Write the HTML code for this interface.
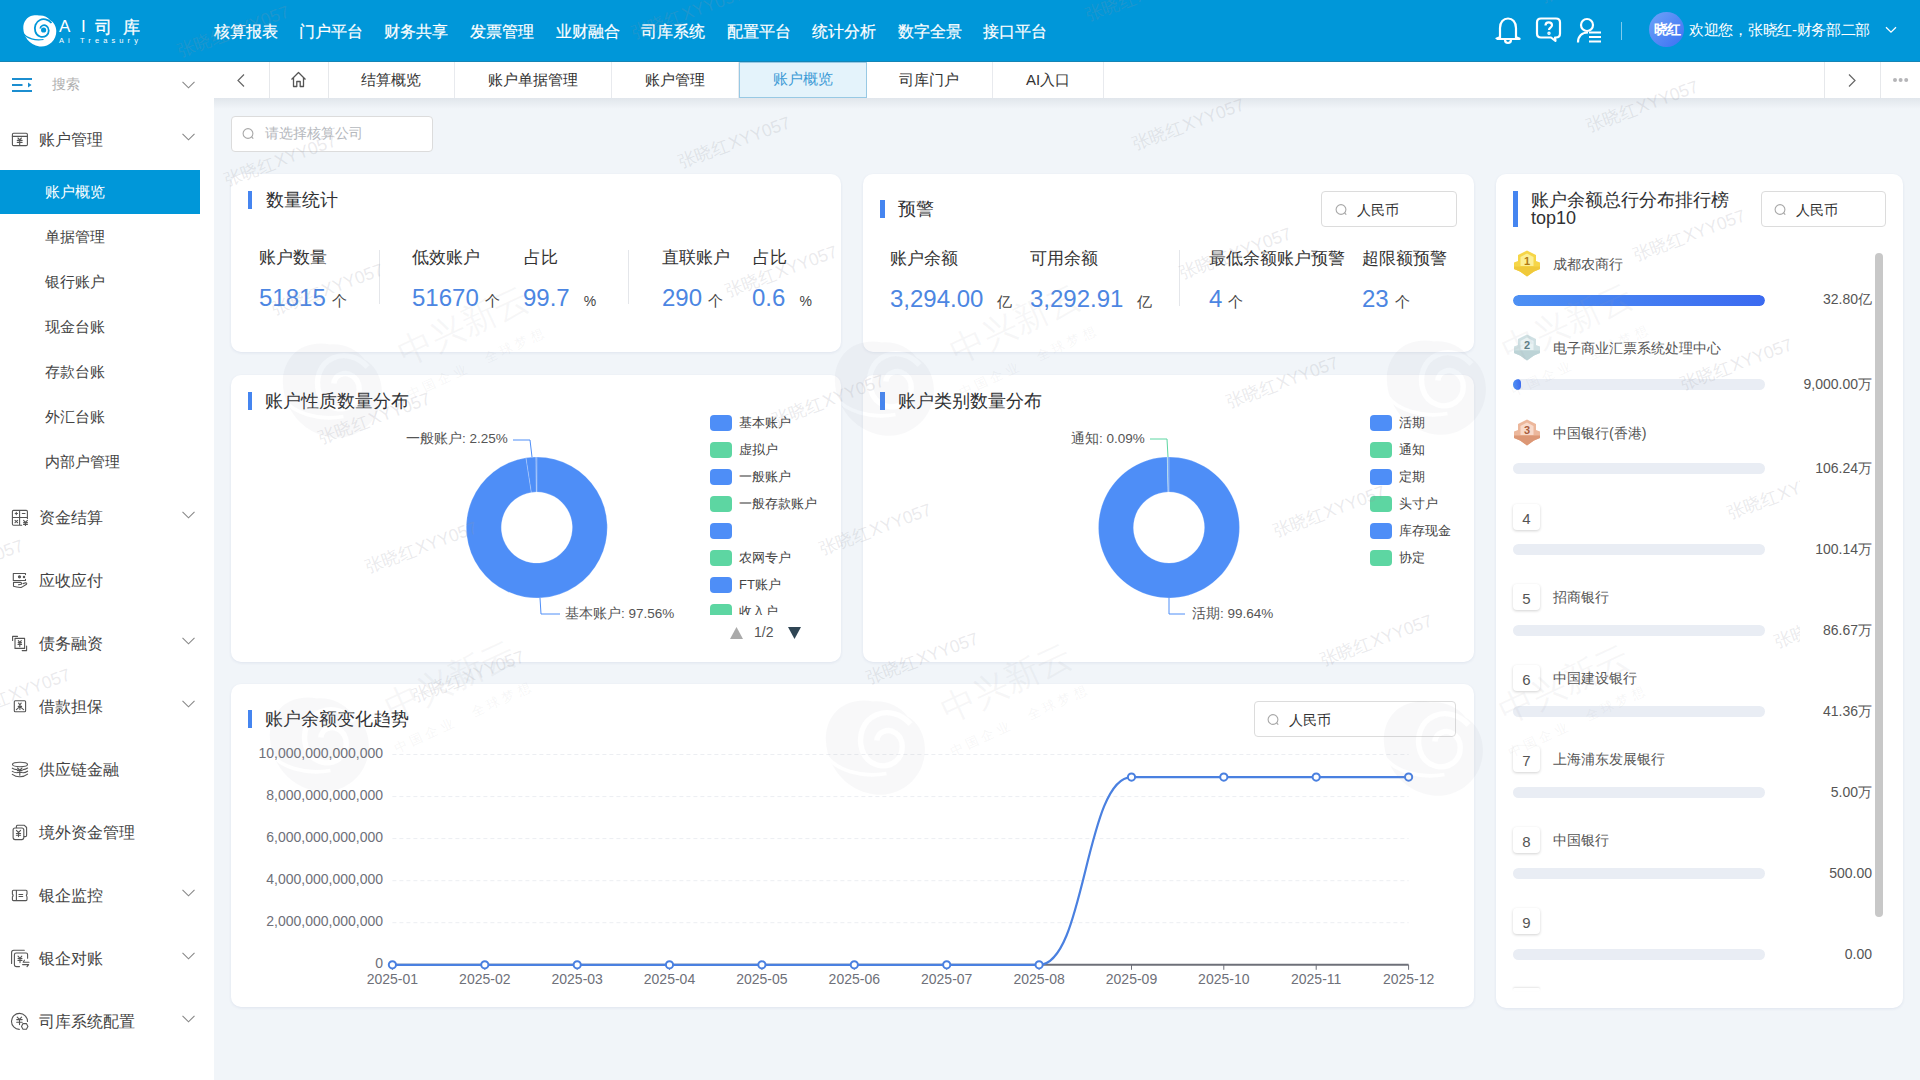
<!DOCTYPE html>
<html><head><meta charset="utf-8">
<style>
*{box-sizing:border-box;margin:0;padding:0}
html,body{width:1920px;height:1080px;overflow:hidden}
body{font-family:"Liberation Sans",sans-serif;background:#f1f5f9;color:#333;position:relative}
.abs{position:absolute}
#hdr{position:absolute;left:0;top:0;width:1920px;height:62px;background:#0097d9;box-shadow:inset 0 -1px 0 #1585b5}
.nav{position:absolute;top:21px;color:#fff;font-size:16px;line-height:22px;white-space:nowrap;-webkit-text-stroke:0.2px #fff}
#side{position:absolute;left:0;top:62px;width:214px;height:1018px;background:#fff}
#tabs{position:absolute;left:214px;top:62px;width:1706px;height:36px;background:#fff}
#tabsh{position:absolute;left:214px;top:98px;width:1706px;height:11px;background:linear-gradient(180deg,rgba(60,80,100,0.09),rgba(60,80,100,0))}
.tab{position:absolute;top:0;height:36px;border-right:1px solid #e8eaee;font-size:15px;line-height:36px;text-align:center;color:#333}
.card{position:absolute;background:#fff;border-radius:10px;box-shadow:0 1px 3px rgba(40,70,130,0.09)}
.ttl{position:absolute;font-size:18px;line-height:22px;color:#303133;white-space:nowrap}
.bar{position:absolute;width:5px;height:18px;background:#4585f0}
.lbl{position:absolute;font-size:17px;line-height:20px;color:#333;white-space:nowrap}
.num{position:absolute;font-size:24px;line-height:28px;color:#4c86e2;white-space:nowrap}
.unit{font-size:15px;color:#444;margin-left:6px}
.pct{font-size:14px;margin-left:14px}
.yi{margin-left:14px}
.rk{position:absolute;font-size:14.3px;line-height:20px;color:#555;white-space:nowrap}
.rv{position:absolute;right:48px;font-size:14px;line-height:20px;color:#555;white-space:nowrap;text-align:right}
.pb{position:absolute;left:1513px;width:252px;height:11px;border-radius:5.5px;background:#e9edf4;overflow:hidden}
.badge{position:absolute;left:1513px;width:27px;height:26px;border-radius:4px;background:#fff;box-shadow:0 1px 3px rgba(0,0,0,0.18);font-size:15px;line-height:30px;text-align:center;color:#555}
.sel{position:absolute;background:#fff;border:1px solid #dcdcdc;border-radius:4px;font-size:13px;color:#333}
.smenu{position:absolute;left:39px;font-size:16px;line-height:20px;color:#444;white-space:nowrap}
.sub{position:absolute;left:45px;font-size:15px;line-height:20px;color:#444;white-space:nowrap}
.chev{position:absolute;left:182px}
</style></head><body>

<!-- HEADER -->
<div id="hdr">
<svg class="abs" style="left:22px;top:14px" width="36" height="34" viewBox="0 0 36 34">
<path d="M11 1.5 C5 2.5 1 8 1.3 14.5 C1.5 22 7 31 17.5 32.5 C26 33.5 34.5 27 34.3 17 C34.2 12 31.5 8 28.5 6.5 C26 3 21 1 17 1.5 C15 1 13 1 11 1.5 Z" fill="#fff"/>
<path d="M29.5 9 C26 5 21 4.5 18 6 C13.5 8 12 13 13.3 17.5 C14.8 22.5 20.5 24.5 24.5 21.5 C27.5 19 27.5 14 24.5 12 C22 10.3 18.5 11.5 18.3 14.5" fill="none" stroke="#0097d9" stroke-width="1.8"/>
<circle cx="21.6" cy="16" r="2.6" fill="#0097d9"/>
<path d="M1.3 19.5 C5 24.5 13 27 21.5 25.5" fill="none" stroke="#0097d9" stroke-width="1.2"/>
</svg>
<div class="abs" style="left:59px;top:17px;color:#fff;font-size:17px;line-height:20px;white-space:nowrap">A</div>
<div class="abs" style="left:81px;top:17px;color:#fff;font-size:17px;line-height:20px;white-space:nowrap">I</div>
<div class="abs" style="left:95px;top:17px;color:#fff;font-size:17px;line-height:22px;white-space:nowrap;-webkit-text-stroke:0.3px #fff">司</div>
<div class="abs" style="left:123px;top:17px;color:#fff;font-size:17px;line-height:22px;white-space:nowrap;-webkit-text-stroke:0.3px #fff">库</div>
<div class="abs" style="left:59px;top:36px;color:#fff;font-size:7.5px;line-height:9px;letter-spacing:4.1px;white-space:nowrap">Ai Treasury</div>
<div class="nav" style="left:214px">核算报表</div>
<div class="nav" style="left:299px">门户平台</div>
<div class="nav" style="left:384px">财务共享</div>
<div class="nav" style="left:470px">发票管理</div>
<div class="nav" style="left:556px">业财融合</div>
<div class="nav" style="left:641px">司库系统</div>
<div class="nav" style="left:727px">配置平台</div>
<div class="nav" style="left:812px">统计分析</div>
<div class="nav" style="left:898px">数字全景</div>
<div class="nav" style="left:983px">接口平台</div>
<svg class="abs" style="left:1494px;top:16px" width="28" height="30" viewBox="0 0 28 30" fill="none" stroke="#fff" stroke-width="2.2" stroke-linejoin="round">
<path d="M6 22 V12 C6 6 9.5 2.5 14 2.5 C18.5 2.5 22 6 22 12 V22"/><path d="M2.5 23 H25.5 V22.5 C24 22 22 21.5 22 21 M6 21 C6 21.5 4 22 2.5 22.5 V23"/><path d="M11 23.5 C11 26 12.5 27 14 27 C15.5 27 17 26 17 23.5"/>
</svg>
<svg class="abs" style="left:1535px;top:16px" width="28" height="28" viewBox="0 0 28 28" fill="none" stroke="#fff" stroke-width="2.2" stroke-linejoin="round">
<path d="M6 2.5 H21 C23.5 2.5 25 4 25 6.5 V17.5 C25 20 23.5 21.5 21 21.5 H20 L20.5 25 L16 21.5 H6 C3.5 21.5 2 20 2 17.5 V6.5 C2 4 3.5 2.5 6 2.5Z"/>
<path d="M10.5 9.5 C10.5 7.5 12 6.3 13.7 6.3 C15.5 6.3 17 7.5 17 9.3 C17 11.5 14 11.8 14 14"/>
<circle cx="14" cy="17.3" r="0.6" fill="#fff"/>
</svg>
<svg class="abs" style="left:1576px;top:17px" width="28" height="28" viewBox="0 0 28 28" fill="none" stroke="#fff" stroke-width="2.2">
<circle cx="11" cy="8" r="6"/><path d="M2 25.5 C2 19 6 15.5 12 15.5"/><path d="M13 15.5 H25 M13 20 H25 M13 24.5 H25"/>
</svg>
<div class="abs" style="left:1621px;top:22px;width:1px;height:18px;background:rgba(255,255,255,0.5)"></div>
<div class="abs" style="left:1649px;top:12px;width:35px;height:35px;border-radius:50%;background:linear-gradient(135deg,#6fa3f8,#3a70f3);color:#fff;font-size:14px;font-weight:bold;line-height:35px;text-align:center;letter-spacing:-1px">晓红</div>
<div class="abs" style="left:1689px;top:19.5px;color:#fff;font-size:15px;line-height:20px;white-space:nowrap;letter-spacing:-0.3px">欢迎您，张晓红-财务部二部</div>
<svg class="abs" style="left:1885px;top:26px" width="12" height="8"><path d="M1 1.2 L6 6.2 L11 1.2" fill="none" stroke="#fff" stroke-width="1.3"/></svg>
</div>

<!-- SIDEBAR -->
<div id="side">
<svg class="abs" style="left:8px;top:66px" width="24" height="24" viewBox="0 0 24 24" fill="none" stroke="#555" stroke-width="1.1" stroke-linecap="round" stroke-linejoin="round"><rect x="4.4" y="5.2" width="15" height="12.4" rx="1.2"/><path d="M4.4 8.4 H19.4 M10 10 L11.7 11.8 L13.4 10 M9.3 12.4 H14.1 M9.3 14.4 H14.1 M11.7 11.8 V16.8"/></svg>
<svg class="abs" style="left:8px;top:443px" width="24" height="24" viewBox="0 0 24 24" fill="none" stroke="#555" stroke-width="1.1" stroke-linecap="round" stroke-linejoin="round"><path d="M13.7 20.2 H5.5 Q4.4 20.2 4.4 19 V6.5 Q4.4 5.4 5.5 5.4 H18.3 Q19.4 5.4 19.4 6.5 V13.4 M11.6 5.4 V20.2 M4.4 12.5 H19.4 M7.2 8.5 H9.5 M8.3 7.4 V9.6 M14.3 8.5 H17 M7.0 15.3 L9.6 17.6 M9.6 15.3 L7.0 17.6 M15.6 15.3 L17.4 17.3 L19.4 15.3 M15.6 17.6 H19.4 M15.6 19.4 H19.4 M17.4 17.3 V20.5"/></svg>
<svg class="abs" style="left:8px;top:508px" width="24" height="24" viewBox="0 0 24 24" fill="none" stroke="#555" stroke-width="1.1" stroke-linecap="round" stroke-linejoin="round"><path d="M17.5 4.6 V3.5 H5.3 V10.5 H17.5 V9.3 M5.5 12.4 H12.5 Q13.8 12.6 13.4 14.2 L10.5 14.8 M5.5 12.4 V16.3 Q9 17.6 13.5 17.4 L18.5 14.2 Q19.2 13 17.6 12.8 L15 13.6"/><circle cx="11.5" cy="6.8" r="1.1" fill="#555"/><circle cx="16" cy="6.9" r="0.7"/></svg>
<svg class="abs" style="left:8px;top:570px" width="24" height="24" viewBox="0 0 24 24" fill="none" stroke="#555" stroke-width="1.1" stroke-linecap="round" stroke-linejoin="round"><path d="M9.5 4.4 H4.6 V8.5 M14.2 18.6 H18.6 V14"/><rect x="7" y="6.4" width="9.6" height="10"/><path d="M10.3 8.6 L11.8 10.3 L13.3 8.6 M10 12.4 H13.6 M10.2 10.6 H13.4 M11.8 10.3 V14.6"/></svg>
<svg class="abs" style="left:8px;top:633px" width="24" height="24" viewBox="0 0 24 24" fill="none" stroke="#555" stroke-width="1.1" stroke-linecap="round" stroke-linejoin="round"><rect x="6.3" y="5.8" width="11.3" height="11" rx="1"/><path d="M10.6 8.2 L11.9 9.8 L13.2 8.2 M11.9 9.8 V14.5 M10.2 11.4 H13.6 M8.4 14.6 L11.9 11.6 L15.6 14.6"/></svg>
<svg class="abs" style="left:8px;top:695px" width="24" height="24" viewBox="0 0 24 24" fill="none" stroke="#555" stroke-width="1.1" stroke-linecap="round" stroke-linejoin="round"><ellipse cx="12" cy="7.5" rx="7.5" ry="2.2"/><path d="M4.3 11.2 Q6.5 12.6 9 12.6 M15 12.6 Q17.5 12.6 19.6 11 M4.3 14.4 Q6.5 15.8 9 15.8 M15 15.8 Q17.5 15.8 19.6 14.2 M4.3 17.4 Q8 20 12 19.8 Q16.5 19.8 19.6 17.2 M9.5 11 L11.8 13.2 L14 11 M9.5 13.4 H14.1 M9.5 15.4 H14.1 M11.8 13.2 V18.2"/></svg>
<svg class="abs" style="left:8px;top:758px" width="24" height="24" viewBox="0 0 24 24" fill="none" stroke="#555" stroke-width="1.1" stroke-linecap="round" stroke-linejoin="round"><path d="M8.4 7.6 V6.3 Q8.6 5.3 9.6 5.3 H16.4 L18.6 7.5 V15.4 Q18.6 16.6 17.2 16.6 H16"/><rect x="5.1" y="8" width="10.7" height="11.6" rx="2"/><path d="M8.4 10.4 L10.5 12.5 L12.6 10.4 M8.4 13.5 H12.6 M8.4 15.3 H12.6 M10.5 12.5 V16.6"/></svg>
<svg class="abs" style="left:8px;top:821px" width="24" height="24" viewBox="0 0 24 24" fill="none" stroke="#555" stroke-width="1.1" stroke-linecap="round" stroke-linejoin="round"><path d="M5.4 7.3 H18 Q19 7.3 19 8.3 V11 Q17.6 12.4 19 13.8 V16.6 Q19 17.6 18 17.6 H5.4 Q4.4 17.6 4.4 16.6 V13.8 Q5.8 12.4 4.4 11 V8.3 Q4.4 7.3 5.4 7.3 Z M8.4 7.3 V17.6 M11 11.5 H14.7 M11 13.5 H14.7"/></svg>
<svg class="abs" style="left:8px;top:884px" width="24" height="24" viewBox="0 0 24 24" fill="none" stroke="#555" stroke-width="1.1" stroke-linecap="round" stroke-linejoin="round"><path d="M3.6 17.5 V6.5 Q3.6 4.3 5.8 4.3 H16.3 M11.5 20.6 H8.5 Q6.4 20.6 6.4 18.5 V8.8 Q6.4 7 8.2 7 H18 Q19.6 7 19.6 8.6 V12.2 M10 10.2 L12 12.3 L13.8 10.2 M10 12.5 H14 M10 14.4 H14 M12 12.3 V16.6 M16.4 14.2 L15.2 16.2 H21 M14.6 18.6 H20.6 L19 20.6"/></svg>
<svg class="abs" style="left:8px;top:947px" width="24" height="24" viewBox="0 0 24 24" fill="none" stroke="#555" stroke-width="1.1" stroke-linecap="round" stroke-linejoin="round"><path d="M19.5 12.4 A8 8 0 1 0 11.3 20.4 M9.2 8.2 L11.5 10.4 L13.6 8.2 M8.7 10.6 H14.2 M8.7 13.3 H14.2 M11.5 10.4 V15.6 M15 14.6 H18.4 L19.9 17.4 L18.4 20.2 H15 L13.5 17.4 Z"/></svg>
<svg class="abs" style="left:12px;top:16px" width="21" height="14" viewBox="0 0 21 14"><path d="M0 1 H20 M0 7 H10.5 M0 13 H20" stroke="#1c8ed0" stroke-width="2"/><path d="M16 4.5 L19.5 7 L16 9.5Z" fill="#1c8ed0"/></svg>
<div class="abs" style="left:52px;top:12px;font-size:14px;line-height:20px;color:#b0b0b0">搜索</div>
<svg class="chev" style="top:19px" width="13" height="8"><path d="M0.5 0.8 L6.5 6.8 L12.5 0.8" fill="none" stroke="#888" stroke-width="1.1"/></svg>
<div class="smenu" style="top:68px">账户管理</div><svg class="chev" style="top:71px" width="13" height="8"><path d="M0.5 0.8 L6.5 6.8 L12.5 0.8" fill="none" stroke="#888" stroke-width="1.1"/></svg><div class="abs" style="left:0;top:108px;width:200px;height:44px;background:#0097d9"></div><div class="sub" style="top:120px;color:#fff">账户概览</div><div class="sub" style="top:165px">单据管理</div><div class="sub" style="top:210px">银行账户</div><div class="sub" style="top:255px">现金台账</div><div class="sub" style="top:300px">存款台账</div><div class="sub" style="top:345px">外汇台账</div><div class="sub" style="top:390px">内部户管理</div><div class="smenu" style="top:446px">资金结算</div><svg class="chev" style="top:449px" width="13" height="8"><path d="M0.5 0.8 L6.5 6.8 L12.5 0.8" fill="none" stroke="#888" stroke-width="1.1"/></svg><div class="smenu" style="top:509px">应收应付</div><div class="smenu" style="top:572px">债务融资</div><svg class="chev" style="top:575px" width="13" height="8"><path d="M0.5 0.8 L6.5 6.8 L12.5 0.8" fill="none" stroke="#888" stroke-width="1.1"/></svg><div class="smenu" style="top:635px">借款担保</div><svg class="chev" style="top:638px" width="13" height="8"><path d="M0.5 0.8 L6.5 6.8 L12.5 0.8" fill="none" stroke="#888" stroke-width="1.1"/></svg><div class="smenu" style="top:698px">供应链金融</div><div class="smenu" style="top:761px">境外资金管理</div><div class="smenu" style="top:824px">银企监控</div><svg class="chev" style="top:827px" width="13" height="8"><path d="M0.5 0.8 L6.5 6.8 L12.5 0.8" fill="none" stroke="#888" stroke-width="1.1"/></svg><div class="smenu" style="top:887px">银企对账</div><svg class="chev" style="top:890px" width="13" height="8"><path d="M0.5 0.8 L6.5 6.8 L12.5 0.8" fill="none" stroke="#888" stroke-width="1.1"/></svg><div class="smenu" style="top:950px">司库系统配置</div><svg class="chev" style="top:953px" width="13" height="8"><path d="M0.5 0.8 L6.5 6.8 L12.5 0.8" fill="none" stroke="#888" stroke-width="1.1"/></svg>
</div>

<!-- TABS -->
<div id="tabs">
<svg class="abs" style="left:23px;top:12px" width="8" height="13" viewBox="0 0 8 13"><path d="M7 0.5 L1 6.5 L7 12.5" fill="none" stroke="#666" stroke-width="1.2"/></svg>
<div class="abs" style="left:55px;top:0;width:1px;height:36px;background:#e6e8eb"></div>
<svg class="abs" style="left:76px;top:9px" width="17" height="17" viewBox="0 0 17 17" fill="none" stroke="#555" stroke-width="1.3" stroke-linejoin="round"><path d="M1.5 8.5 L8.5 1.5 L15.5 8.5 M3.5 6.8 V15.5 H6.8 V10.5 H10.2 V15.5 H13.5 V6.8"/></svg>
<div class="abs" style="left:114px;top:0;width:1px;height:36px;background:#e6e8eb"></div>
<div class="tab" style="left:114px;width:127px">结算概览</div>
<div class="tab" style="left:241px;width:157px">账户单据管理</div>
<div class="tab" style="left:398px;width:127px">账户管理</div>
<div class="tab" style="left:525px;width:128px;background:#e4f3fb;border:1px solid #98c9e4;color:#3d9bd6;line-height:33px;font-size:14.8px">账户概览</div>
<div class="tab" style="left:652px;width:127px">司库门户</div>
<div class="tab" style="left:779px;width:111px">AI入口</div>
<div class="abs" style="left:1610px;top:0;width:1px;height:36px;background:#e6e8eb"></div>
<svg class="abs" style="left:1634px;top:12px" width="8" height="13" viewBox="0 0 8 13"><path d="M1 0.5 L7 6.5 L1 12.5" fill="none" stroke="#666" stroke-width="1.2"/></svg>
<div class="abs" style="left:1666px;top:0;width:1px;height:36px;background:#e6e8eb"></div>
<div class="abs" style="left:1679px;top:16px;width:4px;height:4px;border-radius:50%;background:#b5b5b8;box-shadow:5.6px 0 0 #b5b5b8,11.2px 0 0 #b5b5b8"></div>
</div>

<div id="tabsh"></div>
<!-- CONTENT -->
<div class="sel" style="left:231px;top:116px;width:202px;height:36px"></div>
<svg class="abs" style="left:242px;top:127px" width="14" height="14" viewBox="0 0 14 14" fill="none" stroke="#a8a8a8" stroke-width="1.1"><circle cx="6" cy="6.5" r="4.9"/><path d="M9.6 10 L11.3 11.7"/></svg>
<div class="abs" style="left:265px;top:123px;font-size:14px;line-height:20px;color:#b5b8bd;white-space:nowrap">请选择核算公司</div>

<!-- card1 -->
<div class="card" style="left:231px;top:174px;width:610px;height:178px"></div>
<div class="bar" style="left:248px;top:191px;height:18px;width:4px"></div>
<div class="ttl" style="left:266px;top:189px">数量统计</div>
<div class="lbl" style="left:259px;top:248px">账户数量</div>
<div class="lbl" style="left:412px;top:248px">低效账户</div>
<div class="lbl" style="left:524px;top:248px">占比</div>
<div class="lbl" style="left:662px;top:248px">直联账户</div>
<div class="lbl" style="left:753px;top:248px">占比</div>
<div class="abs" style="left:379px;top:250px;width:1px;height:54px;background:#e4e6ea"></div>
<div class="abs" style="left:628px;top:250px;width:1px;height:54px;background:#e4e6ea"></div>
<div class="num" style="left:259px;top:284px">51815<span class="unit ge">个</span></div>
<div class="num" style="left:412px;top:284px">51670<span class="unit ge">个</span></div>
<div class="num" style="left:523px;top:284px">99.7<span class="unit pct">%</span></div>
<div class="num" style="left:662px;top:284px">290<span class="unit ge">个</span></div>
<div class="num" style="left:752px;top:284px">0.6<span class="unit pct">%</span></div>

<!-- card2 -->
<div class="card" style="left:863px;top:174px;width:611px;height:178px"></div>
<div class="bar" style="left:880px;top:200px;height:18px"></div>
<div class="ttl" style="left:898px;top:198px">预警</div>
<div class="sel" style="left:1321px;top:191px;width:136px;height:36px"></div>
<svg class="abs" style="left:1335px;top:203px" width="14" height="14" viewBox="0 0 14 14" fill="none" stroke="#a8a8a8" stroke-width="1.1"><circle cx="6" cy="6.5" r="4.9"/><path d="M9.6 10 L11.3 11.7"/></svg>
<div class="abs" style="left:1357px;top:200px;font-size:14px;line-height:20px;color:#333;white-space:nowrap">人民币</div>
<div class="lbl" style="left:890px;top:249px">账户余额</div>
<div class="lbl" style="left:1030px;top:249px">可用余额</div>
<div class="lbl" style="left:1209px;top:249px">最低余额账户预警</div>
<div class="lbl" style="left:1362px;top:249px">超限额预警</div>
<div class="abs" style="left:1179px;top:250px;width:1px;height:56px;background:#e4e6ea"></div>
<div class="num" style="left:890px;top:285px">3,294.00<span class="unit yi">亿</span></div>
<div class="num" style="left:1030px;top:285px">3,292.91<span class="unit yi">亿</span></div>
<div class="num" style="left:1209px;top:285px">4<span class="unit ge">个</span></div>
<div class="num" style="left:1362px;top:285px">23<span class="unit ge">个</span></div>

<!-- card3 -->
<div class="card" style="left:1496px;top:174px;width:407px;height:834px"></div>
<div class="bar" style="left:1513px;top:191px;height:36px"></div>
<div class="ttl" style="left:1531px;top:191px;line-height:18px">账户余额总行分布排行榜<br>top10</div>
<div class="sel" style="left:1761px;top:191px;width:125px;height:36px"></div>
<svg class="abs" style="left:1774px;top:203px" width="14" height="14" viewBox="0 0 14 14" fill="none" stroke="#a8a8a8" stroke-width="1.1"><circle cx="6" cy="6.5" r="4.9"/><path d="M9.6 10 L11.3 11.7"/></svg>
<div class="abs" style="left:1796px;top:200px;font-size:14px;line-height:20px;color:#333;white-space:nowrap">人民币</div>
<svg class="abs" style="left:1513px;top:250px" width="28" height="27" viewBox="0 0 28 27"><path d="M14 0.5 L23 5 V11 L27 12.5 V19 L21 21.5 L14 26.5 L7 21.5 L1 19 V12.5 L5 11 V5 Z" fill="#f6d648"/><path d="M1 16.5 H27 V19 L21 21.5 L14 26.5 L7 21.5 L1 19Z" fill="#f0c93a"/><path d="M14 3.5 L20.5 7 V16 H7.5 V7 Z" fill="#fcef95"/><text x="14" y="15" font-size="11" font-weight="bold" text-anchor="middle" fill="#b07a12" font-family="Liberation Sans">1</text></svg><div class="rk" style="left:1553px;top:254px">成都农商行</div><div class="pb" style="top:295px"><div style="width:252px;height:11px;border-radius:5.5px;background:linear-gradient(90deg,#4d90f4,#3b6af0)"></div></div><div class="rv" style="top:289px">32.80亿</div><svg class="abs" style="left:1513px;top:334px" width="28" height="27" viewBox="0 0 28 27"><path d="M14 0.5 L23 5 V11 L27 12.5 V19 L21 21.5 L14 26.5 L7 21.5 L1 19 V12.5 L5 11 V5 Z" fill="#cfe0e3"/><path d="M1 16.5 H27 V19 L21 21.5 L14 26.5 L7 21.5 L1 19Z" fill="#bcd3d6"/><path d="M14 3.5 L20.5 7 V16 H7.5 V7 Z" fill="#e9f2f3"/><text x="14" y="15" font-size="11" font-weight="bold" text-anchor="middle" fill="#5d7d84" font-family="Liberation Sans">2</text></svg><div class="rk" style="left:1553px;top:338px">电子商业汇票系统处理中心</div><div class="pb" style="top:379px"><div style="width:8px;height:11px;border-radius:5.5px;background:linear-gradient(90deg,#4d90f4,#3b6af0)"></div></div><div class="rv" style="top:374px">9,000.00万</div><svg class="abs" style="left:1513px;top:419px" width="28" height="27" viewBox="0 0 28 27"><path d="M14 0.5 L23 5 V11 L27 12.5 V19 L21 21.5 L14 26.5 L7 21.5 L1 19 V12.5 L5 11 V5 Z" fill="#ecb79b"/><path d="M1 16.5 H27 V19 L21 21.5 L14 26.5 L7 21.5 L1 19Z" fill="#dc9775"/><path d="M14 3.5 L20.5 7 V16 H7.5 V7 Z" fill="#f8dacb"/><text x="14" y="15" font-size="11" font-weight="bold" text-anchor="middle" fill="#a85c3c" font-family="Liberation Sans">3</text></svg><div class="rk" style="left:1553px;top:423px">中国银行(香港)</div><div class="pb" style="top:463px"></div><div class="rv" style="top:458px">106.24万</div><div class="badge" style="top:504px">4</div><div class="pb" style="top:544px"></div><div class="rv" style="top:539px">100.14万</div><div class="badge" style="top:584px">5</div><div class="rk" style="left:1553px;top:587px">招商银行</div><div class="pb" style="top:625px"></div><div class="rv" style="top:620px">86.67万</div><div class="badge" style="top:665px">6</div><div class="rk" style="left:1553px;top:668px">中国建设银行</div><div class="pb" style="top:706px"></div><div class="rv" style="top:701px">41.36万</div><div class="badge" style="top:746px">7</div><div class="rk" style="left:1553px;top:749px">上海浦东发展银行</div><div class="pb" style="top:787px"></div><div class="rv" style="top:782px">5.00万</div><div class="badge" style="top:827px">8</div><div class="rk" style="left:1553px;top:830px">中国银行</div><div class="pb" style="top:868px"></div><div class="rv" style="top:863px">500.00</div><div class="badge" style="top:908px">9</div><div class="pb" style="top:949px"></div><div class="rv" style="top:944px">0.00</div><div class="badge" style="top:988px;height:3px;box-shadow:0 -1px 2px rgba(0,0,0,0.1)"></div><div class="abs" style="left:1875px;top:253px;width:8px;height:664px;border-radius:4px;background:#c8c8c8"></div>

<!-- card4 -->
<div class="card" style="left:231px;top:375px;width:610px;height:287px"></div>
<div class="bar" style="left:248px;top:392px;height:18px;width:4px"></div>
<div class="ttl" style="left:265px;top:390px">账户性质数量分布</div>
<svg class="abs" style="left:231px;top:375px" width="610" height="287" viewBox="231 375 610 287"><path d="M536.80 457.00 A70.5 70.5 0 1 1 526.01 457.83 L531.37 492.42 A35.5 35.5 0 1 0 536.80 492.00 Z" fill="#4e8ef7" stroke="#fff" stroke-width="0.5" stroke-opacity="0.45"/><path d="M526.01 457.83 A70.5 70.5 0 0 1 535.94 457.01 L536.37 492.00 A35.5 35.5 0 0 0 531.37 492.42 Z" fill="#4e8ef7" stroke="#fff" stroke-width="0.5" stroke-opacity="0.45"/><path d="M535.94 457.01 A70.5 70.5 0 0 1 536.80 457.00 L536.80 492.00 A35.5 35.5 0 0 0 536.37 492.00 Z" fill="#4e8ef7" stroke="#fff" stroke-width="0.5" stroke-opacity="0.45"/><polyline points="532,457 530,440 513,440" fill="none" stroke="#4e8ef7" stroke-width="1"/><polyline points="540,598 541,614 560,614" fill="none" stroke="#4e8ef7" stroke-width="1"/></svg><div class="abs" style="left:406px;top:429px;font-size:13.5px;line-height:20px;color:#555;white-space:nowrap">一般账户: 2.25%</div><div class="abs" style="left:565px;top:604px;font-size:13.5px;line-height:20px;color:#555;white-space:nowrap">基本账户: 97.56%</div><div class="abs" style="left:700px;top:410px;width:140px;height:205px;overflow:hidden"><div class="abs" style="left:10px;top:5px;width:22px;height:16px;border-radius:4px;background:#4e8ef7"></div><div class="abs" style="left:39px;top:3px;font-size:13px;line-height:20px;color:#444;white-space:nowrap">基本账户</div><div class="abs" style="left:10px;top:32px;width:22px;height:16px;border-radius:4px;background:#5dd6a2"></div><div class="abs" style="left:39px;top:30px;font-size:13px;line-height:20px;color:#444;white-space:nowrap">虚拟户</div><div class="abs" style="left:10px;top:59px;width:22px;height:16px;border-radius:4px;background:#4e8ef7"></div><div class="abs" style="left:39px;top:57px;font-size:13px;line-height:20px;color:#444;white-space:nowrap">一般账户</div><div class="abs" style="left:10px;top:86px;width:22px;height:16px;border-radius:4px;background:#5dd6a2"></div><div class="abs" style="left:39px;top:84px;font-size:13px;line-height:20px;color:#444;white-space:nowrap">一般存款账户</div><div class="abs" style="left:10px;top:113px;width:22px;height:16px;border-radius:4px;background:#4e8ef7"></div><div class="abs" style="left:10px;top:140px;width:22px;height:16px;border-radius:4px;background:#5dd6a2"></div><div class="abs" style="left:39px;top:138px;font-size:13px;line-height:20px;color:#444;white-space:nowrap">农网专户</div><div class="abs" style="left:10px;top:167px;width:22px;height:16px;border-radius:4px;background:#4e8ef7"></div><div class="abs" style="left:39px;top:165px;font-size:13px;line-height:20px;color:#444;white-space:nowrap">FT账户</div><div class="abs" style="left:10px;top:194px;width:22px;height:16px;border-radius:4px;background:#5dd6a2"></div><div class="abs" style="left:39px;top:192px;font-size:13px;line-height:20px;color:#444;white-space:nowrap">收入户</div></div><svg class="abs" style="left:729px;top:626px" width="15" height="14"><path d="M7.5 1 L14 13 H1Z" fill="#aaa"/></svg><div class="abs" style="left:754px;top:622px;font-size:14px;line-height:20px;color:#555;white-space:nowrap">1/2</div><svg class="abs" style="left:787px;top:626px" width="15" height="14"><path d="M1 1 H14 L7.5 13Z" fill="#2f4554"/></svg>

<!-- card5 -->
<div class="card" style="left:863px;top:375px;width:611px;height:287px"></div>
<div class="bar" style="left:880px;top:392px;height:18px"></div>
<div class="ttl" style="left:898px;top:390px">账户类别数量分布</div>
<svg class="abs" style="left:863px;top:375px" width="611" height="287" viewBox="863 375 611 287"><path d="M1168.90 457.00 A70.5 70.5 0 1 1 1167.30 457.02 L1168.09 492.01 A35.5 35.5 0 1 0 1168.90 492.00 Z" fill="#4e8ef7" stroke="#fff" stroke-width="0.5" stroke-opacity="0.45"/><path d="M1167.30 457.02 A70.5 70.5 0 0 1 1167.67 457.01 L1168.28 492.01 A35.5 35.5 0 0 0 1168.09 492.01 Z" fill="#5dd6a2" stroke="#fff" stroke-width="0.5" stroke-opacity="0.45"/><path d="M1167.67 457.01 A70.5 70.5 0 0 1 1168.90 457.00 L1168.90 492.00 A35.5 35.5 0 0 0 1168.28 492.01 Z" fill="#4e8ef7" stroke="#fff" stroke-width="0.5" stroke-opacity="0.45"/><polyline points="1168,457 1167,439 1150,439" fill="none" stroke="#5dd6a2" stroke-width="1"/><polyline points="1169,598 1169,614 1185,614" fill="none" stroke="#4e8ef7" stroke-width="1"/></svg><div class="abs" style="left:1071px;top:429px;font-size:13.5px;line-height:20px;color:#555;white-space:nowrap">通知: 0.09%</div><div class="abs" style="left:1192px;top:604px;font-size:13.5px;line-height:20px;color:#555;white-space:nowrap">活期: 99.64%</div><div class="abs" style="left:1370px;top:415px;width:22px;height:16px;border-radius:4px;background:#4e8ef7"></div><div class="abs" style="left:1399px;top:413px;font-size:13px;line-height:20px;color:#444;white-space:nowrap">活期</div><div class="abs" style="left:1370px;top:442px;width:22px;height:16px;border-radius:4px;background:#5dd6a2"></div><div class="abs" style="left:1399px;top:440px;font-size:13px;line-height:20px;color:#444;white-space:nowrap">通知</div><div class="abs" style="left:1370px;top:469px;width:22px;height:16px;border-radius:4px;background:#4e8ef7"></div><div class="abs" style="left:1399px;top:467px;font-size:13px;line-height:20px;color:#444;white-space:nowrap">定期</div><div class="abs" style="left:1370px;top:496px;width:22px;height:16px;border-radius:4px;background:#5dd6a2"></div><div class="abs" style="left:1399px;top:494px;font-size:13px;line-height:20px;color:#444;white-space:nowrap">头寸户</div><div class="abs" style="left:1370px;top:523px;width:22px;height:16px;border-radius:4px;background:#4e8ef7"></div><div class="abs" style="left:1399px;top:521px;font-size:13px;line-height:20px;color:#444;white-space:nowrap">库存现金</div><div class="abs" style="left:1370px;top:550px;width:22px;height:16px;border-radius:4px;background:#5dd6a2"></div><div class="abs" style="left:1399px;top:548px;font-size:13px;line-height:20px;color:#444;white-space:nowrap">协定</div>

<!-- card6 -->
<div class="card" style="left:231px;top:684px;width:1243px;height:323px"></div>
<div class="bar" style="left:248px;top:710px;height:18px;width:4px"></div>
<div class="ttl" style="left:265px;top:708px">账户余额变化趋势</div>
<div class="sel" style="left:1254px;top:701px;width:202px;height:36px"></div>
<svg class="abs" style="left:1267px;top:713px" width="14" height="14" viewBox="0 0 14 14" fill="none" stroke="#a8a8a8" stroke-width="1.1"><circle cx="6" cy="6.5" r="4.9"/><path d="M9.6 10 L11.3 11.7"/></svg>
<div class="abs" style="left:1289px;top:710px;font-size:14px;line-height:20px;color:#333;white-space:nowrap">人民币</div>
<svg class="abs" style="left:231px;top:684px" width="1243" height="323" viewBox="231 684 1243 323"><line x1="392.4" y1="922.7" x2="1408.6" y2="922.7" stroke="#eceef2" stroke-width="1" stroke-dasharray="4 3"/><line x1="392.4" y1="880.7" x2="1408.6" y2="880.7" stroke="#eceef2" stroke-width="1" stroke-dasharray="4 3"/><line x1="392.4" y1="838.6" x2="1408.6" y2="838.6" stroke="#eceef2" stroke-width="1" stroke-dasharray="4 3"/><line x1="392.4" y1="796.6" x2="1408.6" y2="796.6" stroke="#eceef2" stroke-width="1" stroke-dasharray="4 3"/><line x1="392.4" y1="754.5" x2="1408.6" y2="754.5" stroke="#eceef2" stroke-width="1" stroke-dasharray="4 3"/><line x1="392.4" y1="964.8" x2="1408.6" y2="964.8" stroke="#6e7079" stroke-width="2"/><line x1="392.4" y1="964.8" x2="392.4" y2="969.8" stroke="#6e7079" stroke-width="1"/><line x1="484.8" y1="964.8" x2="484.8" y2="969.8" stroke="#6e7079" stroke-width="1"/><line x1="577.2" y1="964.8" x2="577.2" y2="969.8" stroke="#6e7079" stroke-width="1"/><line x1="669.5" y1="964.8" x2="669.5" y2="969.8" stroke="#6e7079" stroke-width="1"/><line x1="761.9" y1="964.8" x2="761.9" y2="969.8" stroke="#6e7079" stroke-width="1"/><line x1="854.3" y1="964.8" x2="854.3" y2="969.8" stroke="#6e7079" stroke-width="1"/><line x1="946.7" y1="964.8" x2="946.7" y2="969.8" stroke="#6e7079" stroke-width="1"/><line x1="1039.1" y1="964.8" x2="1039.1" y2="969.8" stroke="#6e7079" stroke-width="1"/><line x1="1131.5" y1="964.8" x2="1131.5" y2="969.8" stroke="#6e7079" stroke-width="1"/><line x1="1223.8" y1="964.8" x2="1223.8" y2="969.8" stroke="#6e7079" stroke-width="1"/><line x1="1316.2" y1="964.8" x2="1316.2" y2="969.8" stroke="#6e7079" stroke-width="1"/><line x1="1408.6" y1="964.8" x2="1408.6" y2="969.8" stroke="#6e7079" stroke-width="1"/><path d="M392.4 964.8 L1039.1 964.8 C1085.3 964.8 1085.3 777.1 1131.5 777.1 L1408.6 777.1" fill="none" stroke="#4a80e0" stroke-width="2.2"/><circle cx="392.4" cy="964.8" r="3.6" fill="#fff" stroke="#4a80e0" stroke-width="2"/><circle cx="484.8" cy="964.8" r="3.6" fill="#fff" stroke="#4a80e0" stroke-width="2"/><circle cx="577.2" cy="964.8" r="3.6" fill="#fff" stroke="#4a80e0" stroke-width="2"/><circle cx="669.5" cy="964.8" r="3.6" fill="#fff" stroke="#4a80e0" stroke-width="2"/><circle cx="761.9" cy="964.8" r="3.6" fill="#fff" stroke="#4a80e0" stroke-width="2"/><circle cx="854.3" cy="964.8" r="3.6" fill="#fff" stroke="#4a80e0" stroke-width="2"/><circle cx="946.7" cy="964.8" r="3.6" fill="#fff" stroke="#4a80e0" stroke-width="2"/><circle cx="1039.1" cy="964.8" r="3.6" fill="#fff" stroke="#4a80e0" stroke-width="2"/><circle cx="1131.5" cy="777.1" r="3.6" fill="#fff" stroke="#4a80e0" stroke-width="2"/><circle cx="1223.8" cy="777.1" r="3.6" fill="#fff" stroke="#4a80e0" stroke-width="2"/><circle cx="1316.2" cy="777.1" r="3.6" fill="#fff" stroke="#4a80e0" stroke-width="2"/><circle cx="1408.6" cy="777.1" r="3.6" fill="#fff" stroke="#4a80e0" stroke-width="2"/></svg><div class="abs" style="left:183px;width:200px;top:743px;font-size:14px;line-height:20px;color:#6e7079;text-align:right;white-space:nowrap">10,000,000,000,000</div><div class="abs" style="left:183px;width:200px;top:785px;font-size:14px;line-height:20px;color:#6e7079;text-align:right;white-space:nowrap">8,000,000,000,000</div><div class="abs" style="left:183px;width:200px;top:827px;font-size:14px;line-height:20px;color:#6e7079;text-align:right;white-space:nowrap">6,000,000,000,000</div><div class="abs" style="left:183px;width:200px;top:869px;font-size:14px;line-height:20px;color:#6e7079;text-align:right;white-space:nowrap">4,000,000,000,000</div><div class="abs" style="left:183px;width:200px;top:911px;font-size:14px;line-height:20px;color:#6e7079;text-align:right;white-space:nowrap">2,000,000,000,000</div><div class="abs" style="left:183px;width:200px;top:953px;font-size:14px;line-height:20px;color:#6e7079;text-align:right;white-space:nowrap">0</div><div class="abs" style="left:342.4px;width:100px;top:969px;font-size:14px;line-height:20px;color:#6e7079;text-align:center;white-space:nowrap">2025-01</div><div class="abs" style="left:434.8px;width:100px;top:969px;font-size:14px;line-height:20px;color:#6e7079;text-align:center;white-space:nowrap">2025-02</div><div class="abs" style="left:527.2px;width:100px;top:969px;font-size:14px;line-height:20px;color:#6e7079;text-align:center;white-space:nowrap">2025-03</div><div class="abs" style="left:619.5px;width:100px;top:969px;font-size:14px;line-height:20px;color:#6e7079;text-align:center;white-space:nowrap">2025-04</div><div class="abs" style="left:711.9px;width:100px;top:969px;font-size:14px;line-height:20px;color:#6e7079;text-align:center;white-space:nowrap">2025-05</div><div class="abs" style="left:804.3px;width:100px;top:969px;font-size:14px;line-height:20px;color:#6e7079;text-align:center;white-space:nowrap">2025-06</div><div class="abs" style="left:896.7px;width:100px;top:969px;font-size:14px;line-height:20px;color:#6e7079;text-align:center;white-space:nowrap">2025-07</div><div class="abs" style="left:989.1px;width:100px;top:969px;font-size:14px;line-height:20px;color:#6e7079;text-align:center;white-space:nowrap">2025-08</div><div class="abs" style="left:1081.5px;width:100px;top:969px;font-size:14px;line-height:20px;color:#6e7079;text-align:center;white-space:nowrap">2025-09</div><div class="abs" style="left:1173.8px;width:100px;top:969px;font-size:14px;line-height:20px;color:#6e7079;text-align:center;white-space:nowrap">2025-10</div><div class="abs" style="left:1266.2px;width:100px;top:969px;font-size:14px;line-height:20px;color:#6e7079;text-align:center;white-space:nowrap">2025-11</div><div class="abs" style="left:1358.6px;width:100px;top:969px;font-size:14px;line-height:20px;color:#6e7079;text-align:center;white-space:nowrap">2025-12</div>
<svg style="position:absolute;left:0;top:0;pointer-events:none" width="1800" height="800" viewBox="0 0 1800 800"><defs><mask id="lm" maskUnits="userSpaceOnUse" x="-60" y="-60" width="120" height="120"><g transform="scale(3) translate(-18,-17)"><path d="M11 1.5 C5 2.5 1 8 1.3 14.5 C1.5 22 7 31 17.5 32.5 C26 33.5 34.5 27 34.3 17 C34.2 12 31.5 8 28.5 6.5 C26 3 21 1 17 1.5 C15 1 13 1 11 1.5 Z" fill="#fff"/><path d="M29.5 9 C26 5 21 4.5 18 6 C13.5 8 12 13 13.3 17.5 C14.8 22.5 20.5 24.5 24.5 21.5 C27.5 19 27.5 14 24.5 12 C22 10.3 18.5 11.5 18.3 14.5" fill="none" stroke="#000" stroke-width="1.8"/><path d="M1.3 19.5 C5 24.5 13 27 21.5 25.5" fill="none" stroke="#000" stroke-width="1.2"/></g></mask></defs><g transform="translate(333,391)"><rect x="-60" y="-60" width="120" height="120" fill="rgba(150,150,160,0.065)" mask="url(#lm)"/><text x="130" y="-66" transform="rotate(-25 130 -66)" text-anchor="middle" dominant-baseline="central" font-family="Liberation Sans" font-size="35" fill="rgba(160,160,170,0.09)">中兴新云</text><text x="144" y="-28" transform="rotate(-25 144 -28)" text-anchor="middle" dominant-baseline="central" font-family="Liberation Sans" font-size="13" letter-spacing="4" fill="rgba(160,160,170,0.10)">中国企业　全球梦想</text></g><g transform="translate(885,389)"><rect x="-60" y="-60" width="120" height="120" fill="rgba(150,150,160,0.065)" mask="url(#lm)"/><text x="130" y="-66" transform="rotate(-25 130 -66)" text-anchor="middle" dominant-baseline="central" font-family="Liberation Sans" font-size="35" fill="rgba(160,160,170,0.09)">中兴新云</text><text x="144" y="-28" transform="rotate(-25 144 -28)" text-anchor="middle" dominant-baseline="central" font-family="Liberation Sans" font-size="13" letter-spacing="4" fill="rgba(160,160,170,0.10)">中国企业　全球梦想</text></g><g transform="translate(1437,388)"><rect x="-60" y="-60" width="120" height="120" fill="rgba(150,150,160,0.065)" mask="url(#lm)"/><text x="130" y="-66" transform="rotate(-25 130 -66)" text-anchor="middle" dominant-baseline="central" font-family="Liberation Sans" font-size="35" fill="rgba(160,160,170,0.09)">中兴新云</text><text x="144" y="-28" transform="rotate(-25 144 -28)" text-anchor="middle" dominant-baseline="central" font-family="Liberation Sans" font-size="13" letter-spacing="4" fill="rgba(160,160,170,0.10)">中国企业　全球梦想</text></g><g transform="translate(320,745)"><rect x="-60" y="-60" width="120" height="120" fill="rgba(150,150,160,0.065)" mask="url(#lm)"/><text x="130" y="-66" transform="rotate(-25 130 -66)" text-anchor="middle" dominant-baseline="central" font-family="Liberation Sans" font-size="35" fill="rgba(160,160,170,0.09)">中兴新云</text><text x="144" y="-28" transform="rotate(-25 144 -28)" text-anchor="middle" dominant-baseline="central" font-family="Liberation Sans" font-size="13" letter-spacing="4" fill="rgba(160,160,170,0.10)">中国企业　全球梦想</text></g><g transform="translate(876,748)"><rect x="-60" y="-60" width="120" height="120" fill="rgba(150,150,160,0.065)" mask="url(#lm)"/><text x="130" y="-66" transform="rotate(-25 130 -66)" text-anchor="middle" dominant-baseline="central" font-family="Liberation Sans" font-size="35" fill="rgba(160,160,170,0.09)">中兴新云</text><text x="144" y="-28" transform="rotate(-25 144 -28)" text-anchor="middle" dominant-baseline="central" font-family="Liberation Sans" font-size="13" letter-spacing="4" fill="rgba(160,160,170,0.10)">中国企业　全球梦想</text></g><g transform="translate(1434,749)"><rect x="-60" y="-60" width="120" height="120" fill="rgba(150,150,160,0.065)" mask="url(#lm)"/><text x="130" y="-66" transform="rotate(-25 130 -66)" text-anchor="middle" dominant-baseline="central" font-family="Liberation Sans" font-size="35" fill="rgba(160,160,170,0.09)">中兴新云</text><text x="144" y="-28" transform="rotate(-25 144 -28)" text-anchor="middle" dominant-baseline="central" font-family="Liberation Sans" font-size="13" letter-spacing="4" fill="rgba(160,160,170,0.10)">中国企业　全球梦想</text></g><text x="-33" y="565" transform="rotate(-20 -33 565)" text-anchor="middle" dominant-baseline="central" font-family="Liberation Sans" font-size="17.5" fill="rgba(150,150,160,0.2)">张晓红XYY057</text><text x="14" y="694" transform="rotate(-20 14 694)" text-anchor="middle" dominant-baseline="central" font-family="Liberation Sans" font-size="17.5" fill="rgba(150,150,160,0.2)">张晓红XYY057</text><text x="233" y="31" transform="rotate(-20 233 31)" text-anchor="middle" dominant-baseline="central" font-family="Liberation Sans" font-size="17.5" fill="rgba(150,150,160,0.2)">张晓红XYY057</text><text x="280" y="160" transform="rotate(-20 280 160)" text-anchor="middle" dominant-baseline="central" font-family="Liberation Sans" font-size="17.5" fill="rgba(150,150,160,0.2)">张晓红XYY057</text><text x="327" y="289" transform="rotate(-20 327 289)" text-anchor="middle" dominant-baseline="central" font-family="Liberation Sans" font-size="17.5" fill="rgba(150,150,160,0.2)">张晓红XYY057</text><text x="374" y="418" transform="rotate(-20 374 418)" text-anchor="middle" dominant-baseline="central" font-family="Liberation Sans" font-size="17.5" fill="rgba(150,150,160,0.2)">张晓红XYY057</text><text x="421" y="547" transform="rotate(-20 421 547)" text-anchor="middle" dominant-baseline="central" font-family="Liberation Sans" font-size="17.5" fill="rgba(150,150,160,0.2)">张晓红XYY057</text><text x="468" y="676" transform="rotate(-20 468 676)" text-anchor="middle" dominant-baseline="central" font-family="Liberation Sans" font-size="17.5" fill="rgba(150,150,160,0.2)">张晓红XYY057</text><text x="687" y="13" transform="rotate(-20 687 13)" text-anchor="middle" dominant-baseline="central" font-family="Liberation Sans" font-size="17.5" fill="rgba(150,150,160,0.2)">张晓红XYY057</text><text x="734" y="142" transform="rotate(-20 734 142)" text-anchor="middle" dominant-baseline="central" font-family="Liberation Sans" font-size="17.5" fill="rgba(150,150,160,0.2)">张晓红XYY057</text><text x="781" y="271" transform="rotate(-20 781 271)" text-anchor="middle" dominant-baseline="central" font-family="Liberation Sans" font-size="17.5" fill="rgba(150,150,160,0.2)">张晓红XYY057</text><text x="828" y="400" transform="rotate(-20 828 400)" text-anchor="middle" dominant-baseline="central" font-family="Liberation Sans" font-size="17.5" fill="rgba(150,150,160,0.2)">张晓红XYY057</text><text x="875" y="529" transform="rotate(-20 875 529)" text-anchor="middle" dominant-baseline="central" font-family="Liberation Sans" font-size="17.5" fill="rgba(150,150,160,0.2)">张晓红XYY057</text><text x="922" y="658" transform="rotate(-20 922 658)" text-anchor="middle" dominant-baseline="central" font-family="Liberation Sans" font-size="17.5" fill="rgba(150,150,160,0.2)">张晓红XYY057</text><text x="1141" y="-5" transform="rotate(-20 1141 -5)" text-anchor="middle" dominant-baseline="central" font-family="Liberation Sans" font-size="17.5" fill="rgba(150,150,160,0.2)">张晓红XYY057</text><text x="1188" y="124" transform="rotate(-20 1188 124)" text-anchor="middle" dominant-baseline="central" font-family="Liberation Sans" font-size="17.5" fill="rgba(150,150,160,0.2)">张晓红XYY057</text><text x="1235" y="253" transform="rotate(-20 1235 253)" text-anchor="middle" dominant-baseline="central" font-family="Liberation Sans" font-size="17.5" fill="rgba(150,150,160,0.2)">张晓红XYY057</text><text x="1282" y="382" transform="rotate(-20 1282 382)" text-anchor="middle" dominant-baseline="central" font-family="Liberation Sans" font-size="17.5" fill="rgba(150,150,160,0.2)">张晓红XYY057</text><text x="1329" y="511" transform="rotate(-20 1329 511)" text-anchor="middle" dominant-baseline="central" font-family="Liberation Sans" font-size="17.5" fill="rgba(150,150,160,0.2)">张晓红XYY057</text><text x="1376" y="640" transform="rotate(-20 1376 640)" text-anchor="middle" dominant-baseline="central" font-family="Liberation Sans" font-size="17.5" fill="rgba(150,150,160,0.2)">张晓红XYY057</text><text x="1595" y="-23" transform="rotate(-20 1595 -23)" text-anchor="middle" dominant-baseline="central" font-family="Liberation Sans" font-size="17.5" fill="rgba(150,150,160,0.2)">张晓红XYY057</text><text x="1642" y="106" transform="rotate(-20 1642 106)" text-anchor="middle" dominant-baseline="central" font-family="Liberation Sans" font-size="17.5" fill="rgba(150,150,160,0.2)">张晓红XYY057</text><text x="1689" y="235" transform="rotate(-20 1689 235)" text-anchor="middle" dominant-baseline="central" font-family="Liberation Sans" font-size="17.5" fill="rgba(150,150,160,0.2)">张晓红XYY057</text><text x="1736" y="364" transform="rotate(-20 1736 364)" text-anchor="middle" dominant-baseline="central" font-family="Liberation Sans" font-size="17.5" fill="rgba(150,150,160,0.2)">张晓红XYY057</text><text x="1783" y="493" transform="rotate(-20 1783 493)" text-anchor="middle" dominant-baseline="central" font-family="Liberation Sans" font-size="17.5" fill="rgba(150,150,160,0.2)">张晓红XYY057</text><text x="1830" y="622" transform="rotate(-20 1830 622)" text-anchor="middle" dominant-baseline="central" font-family="Liberation Sans" font-size="17.5" fill="rgba(150,150,160,0.2)">张晓红XYY057</text></svg>
</body></html>
